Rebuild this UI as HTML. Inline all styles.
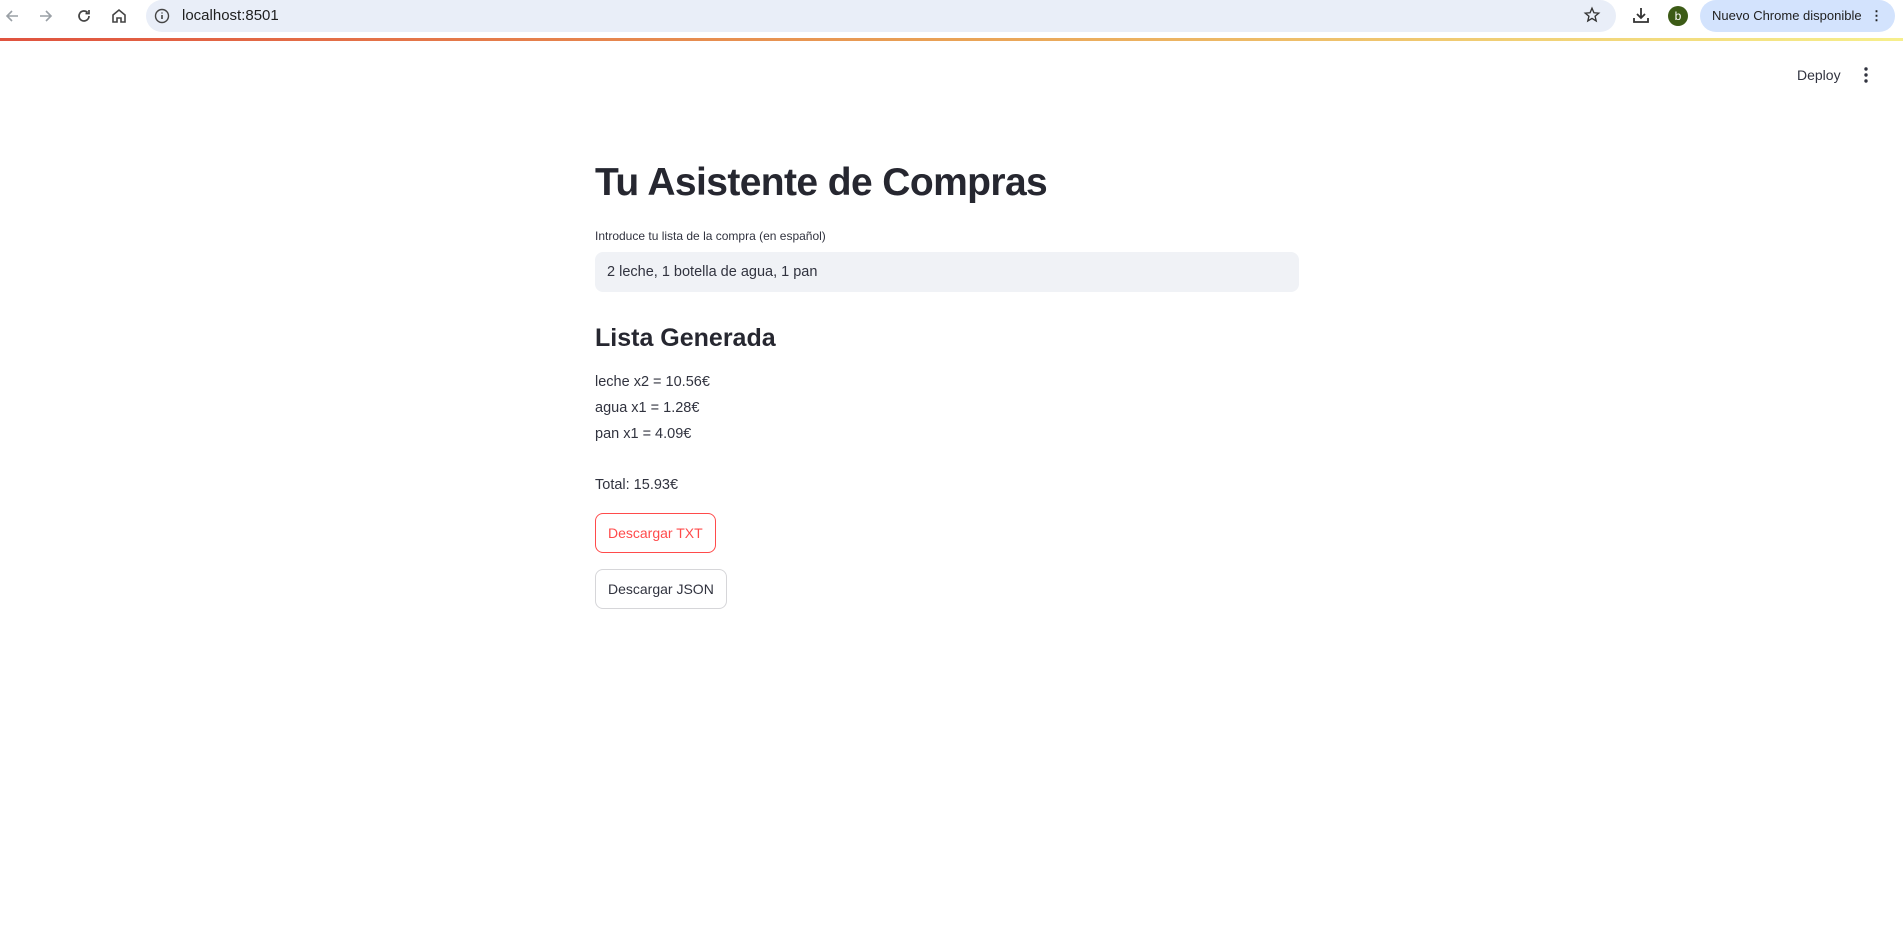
<!DOCTYPE html>
<html><head><meta charset="utf-8"><style>
*{box-sizing:border-box;margin:0;padding:0}
body{width:1903px;height:951px;background:#fff;font-family:"Liberation Sans",sans-serif;color:#31333f;position:relative;overflow:hidden}
.bar{position:absolute;left:0;top:0;width:1903px;height:38px;background:#fff}
.addr{position:absolute;left:146px;top:0;width:1470px;height:32px;background:#e9eef8;border-radius:16px}
.url{position:absolute;left:182px;top:7px;font-size:15px;color:#1f1f1f}
.grad{position:absolute;left:0;top:38px;width:1903px;height:3px;background:linear-gradient(90deg,#e0533f,#e9a256 50%,#f6ef8c)}
.ico{position:absolute}
.pill{position:absolute;left:1700px;top:0;width:195px;height:32px;background:#d3e3fd;border-radius:16px;font-size:13px;color:#1f1f1f;line-height:32px;padding-left:12px}
.av{position:absolute;left:1668px;top:6px;width:20px;height:20px;border-radius:50%;background:#3c5b16;color:#fff;font-size:12px;text-align:center;line-height:20px}
.deploy{position:absolute;left:1797px;top:67px;font-size:14px;color:#31333f}
h1{position:absolute;left:595px;top:161px;font-size:39px;font-weight:bold;color:#262730;letter-spacing:-0.6px}
.lbl{position:absolute;left:595px;top:229px;font-size:12px}
.inp{position:absolute;left:595px;top:252px;width:704px;height:40px;background:#f0f2f6;border-radius:8px;font-size:14.5px;line-height:40px;padding-left:12px}
h2{position:absolute;left:595px;top:324px;font-size:25px;font-weight:bold;color:#262730}
.t{position:absolute;left:595px;font-size:14.5px}
.btn{position:absolute;left:595px;height:40px;border:1px solid #d6d6d9;border-radius:8px;font-size:14px;line-height:38px;padding:0 12px;background:#fff}
</style></head><body>
<div class="bar"></div>
<svg class="ico" style="left:4px;top:8px" width="16" height="16" viewBox="0 0 16 16"><path d="M14 8H3M8 3L3 8l5 5" stroke="#9aa0a6" stroke-width="1.6" fill="none"/></svg>
<svg class="ico" style="left:38px;top:8px" width="16" height="16" viewBox="0 0 16 16"><path d="M2 8h11M8 3l5 5-5 5" stroke="#9aa0a6" stroke-width="1.6" fill="none"/></svg>
<svg class="ico" style="left:75px;top:7px" width="18" height="18" viewBox="0 0 18 18"><path d="M14 9a5 5 0 1 1-1.5-3.6M14 3v3.5h-3.5" stroke="#444" stroke-width="1.7" fill="none"/></svg>
<svg class="ico" style="left:110px;top:7px" width="18" height="18" viewBox="0 0 18 18"><path d="M3 8l6-5 6 5v7h-4v-4H7v4H3z" stroke="#444" stroke-width="1.6" fill="none"/></svg>
<div class="addr"></div>
<svg class="ico" style="left:154px;top:8px" width="16" height="16" viewBox="0 0 16 16"><circle cx="8" cy="8" r="6.5" stroke="#444" stroke-width="1.4" fill="none"/><path d="M8 7v4M8 4.5v1" stroke="#444" stroke-width="1.6"/></svg>
<div class="url">localhost:8501</div>
<svg class="ico" style="left:1583px;top:6px" width="18" height="18" viewBox="0 0 24 24"><path d="M12 3l2.6 6 6.4.5-4.9 4.2 1.5 6.3L12 16.6 6.4 20l1.5-6.3L3 9.5 9.4 9z" stroke="#333" stroke-width="1.8" fill="none"/></svg>
<svg class="ico" style="left:1632px;top:6px" width="18" height="18" viewBox="0 0 18 18"><path d="M9 2v10M5 8l4 4 4-4M2 12v4h14v-4" stroke="#333" stroke-width="1.8" fill="none"/></svg>
<div class="av">b</div>
<div class="pill">Nuevo Chrome disponible<span style="position:absolute;right:12px;top:0;font-weight:bold">⋮</span></div>
<div class="grad"></div>
<div class="deploy">Deploy</div>
<svg class="ico" style="left:1858px;top:66px" width="16" height="18" viewBox="0 0 16 18"><circle cx="8" cy="3" r="1.7" fill="#31333f"/><circle cx="8" cy="9" r="1.7" fill="#31333f"/><circle cx="8" cy="15" r="1.7" fill="#31333f"/></svg>
<h1>Tu Asistente de Compras</h1>
<div class="lbl">Introduce tu lista de la compra (en español)</div>
<div class="inp">2 leche, 1 botella de agua, 1 pan</div>
<h2>Lista Generada</h2>
<div class="t" style="top:374px">leche x2 = 10.56€</div>
<div class="t" style="top:400px">agua x1 = 1.28€</div>
<div class="t" style="top:426px">pan x1 = 4.09€</div>
<div class="t" style="top:477px">Total: 15.93€</div>
<div class="btn" style="top:513px;border-color:#ff4b4b;color:#ff4b4b">Descargar TXT</div>
<div class="btn" style="top:569px">Descargar JSON</div>
</body></html>
